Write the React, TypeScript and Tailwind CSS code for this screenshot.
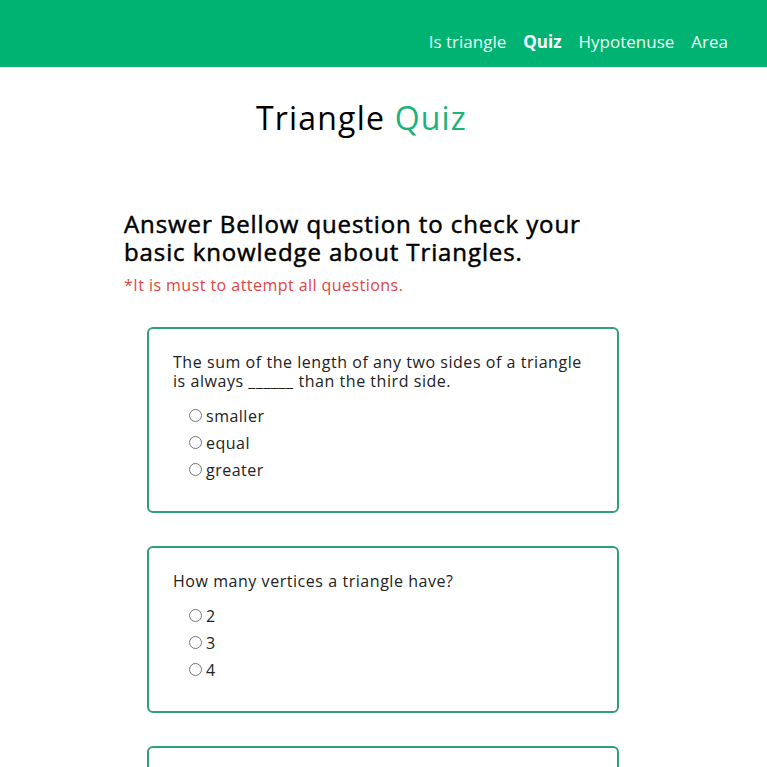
import React from "react";

const font = { fontFamily: '"Open Sans", "Noto Sans", sans-serif' };

function Option({ label }: { label: string }) {
  return (
    <label className="flex items-center h-[27px] text-[16px] tracking-[0.5px] text-[#222]">
      <span className="w-[13px] h-[13px] rounded-full border border-[#767676] bg-white mr-[4px] shrink-0" />
      <span>{label}</span>
    </label>
  );
}

function Card({ q, opts }: { q: React.ReactNode; opts: string[] }) {
  return (
    <div className="w-[472px] ml-[23px] border-2 border-[#2f9e7b] rounded-[6px] pt-[24px] pb-[28px] pl-[24px] pr-[20px]">
      <p className="text-[16px] leading-[19px] tracking-[0.55px] text-[#222]">{q}</p>
      <div className="mt-[11px] pl-[16px] flex flex-col">
        {opts.map((o) => (
          <Option key={o} label={o} />
        ))}
      </div>
    </div>
  );
}

export default function App() {
  return (
    <div className="min-h-screen bg-white" style={font}>
      <header className="h-[67px] bg-[#00b372] flex items-center justify-end pr-[39px] pt-[16px]">
        <nav className="flex gap-[17px] text-[17px] text-[#e8fff4]">
          <a>Is triangle</a>
          <a className="font-bold text-white">Quiz</a>
          <a>Hypotenuse</a>
          <a>Area</a>
        </nav>
      </header>
      <h1 className="text-[32px] leading-[38px] tracking-[1.2px] text-black text-center pr-[44px] mt-[32px]">
        Triangle <span className="text-[#1ab37a]">Quiz</span>
      </h1>
      <main className="pl-[124px] mt-[73px]">
        <h2 className="text-[24px] leading-[28px] tracking-[0.9px] font-normal [-webkit-text-stroke:0.5px_black] text-black">
          Answer Bellow question to check your
          <br />
          basic knowledge about Triangles.
        </h2>
        <p className="text-[16px] leading-[20px] tracking-[0.45px] text-[#e04545] mt-[9px]">
          *It is must to attempt all questions.
        </p>
        <div className="mt-[32px] flex flex-col gap-[33px] pb-[40px]">
          <Card
            q={
              <>
                The sum of the length of any two sides of a triangle
                <br />
                is always ______ than the third side.
              </>
            }
            opts={["smaller", "equal", "greater"]}
          />
          <Card q="How many vertices a triangle have?" opts={["2", "3", "4"]} />
          <Card q="A triangle has how many sides?" opts={["2", "3", "4"]} />
        </div>
      </main>
    </div>
  );
}
